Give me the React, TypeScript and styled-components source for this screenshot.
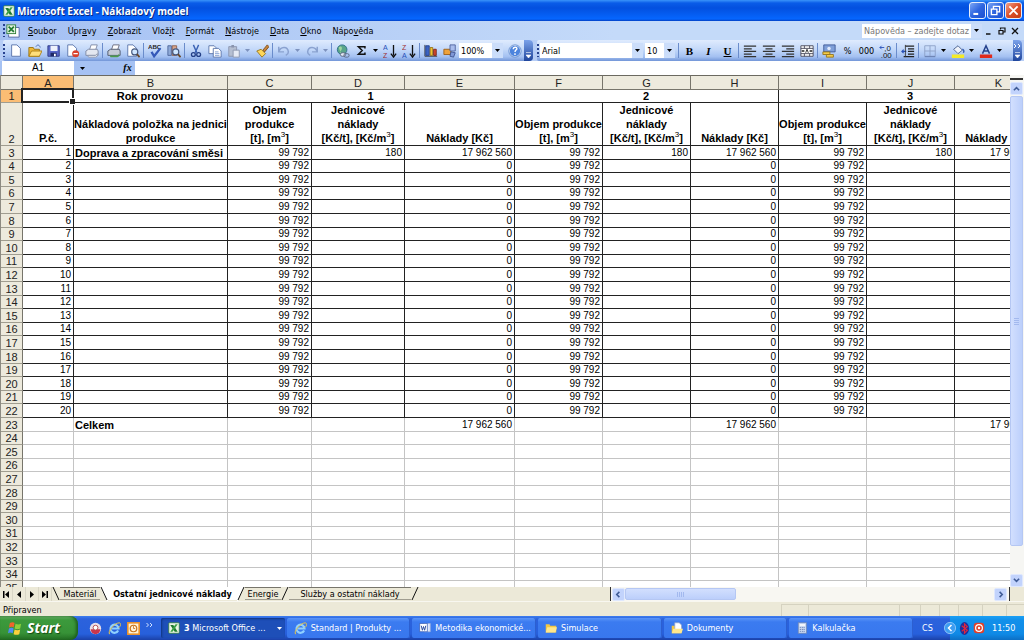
import React from "react";
import styled, { createGlobalStyle, css } from "styled-components";

const UI = `"DejaVu Sans Condensed", "DejaVu Sans", sans-serif`;
const CELL = `"Liberation Sans", Arial, sans-serif`;

const Global = createGlobalStyle`
  * { box-sizing: border-box; }
  html, body { margin: 0; height: 100%; overflow: hidden; }
  body { font-family: ${UI}; font-size: 9px; color: #000; background: #fff; }
  button, input, select { font: inherit; color: inherit; margin: 0; padding: 0; border: 0; border-radius: 0; background: none; outline: none; }
  svg { display: block; flex: none; }
`;

const Window = styled.div`
  display: flex;
  flex-direction: column;
  height: 100vh;
`;

/* ---------- title bar ---------- */
const TitleBar = styled.header`
  display: flex;
  align-items: center;
  flex: none;
  height: 21px;
  padding: 0 2px 0 3px;
  gap: 2px;
  color: #fff;
  background: linear-gradient(#3a94fa 0, #0a5ce8 3px, #0350df 8px, #0560f6 16px, #0566ff 19px, #0340c4 21px);
`;
const Title = styled.h1`
  flex: 1;
  margin: 0;
  font: bold 10px/16px "Open Sans", "Noto Sans", sans-serif;
  text-shadow: 1px 1px #0a2a80;
  white-space: nowrap;
`;
const CaptionButton = styled.button<{ $close?: boolean }>`
  display: grid;
  place-items: center;
  width: 17px;
  height: 17px;
  border: 1px solid #e6eefc;
  border-radius: 3px;
  background: ${(p) =>
    p.$close
      ? "linear-gradient(135deg, #f0a088, #dd4f28 50%, #c33c14)"
      : "linear-gradient(135deg, #7ca6f5, #2f66e0 50%, #1c4fd0)"};
`;
const CaptionGroup = styled.div`
  display: flex;
  gap: 1px;
`;

/* ---------- menu ---------- */
const MenuBar = styled.nav`
  display: flex;
  align-items: center;
  flex: none;
  height: 19px;
  padding: 0 3px;
  background: linear-gradient(90deg, #a4c0f3, #c4daf9 60%);
`;
const Grip = styled.span`
  flex: none;
  width: 2px;
  height: 13px;
  margin-right: 1px;
  background: repeating-linear-gradient(#27418f 0 2px, transparent 2px 4px);
`;
const MenuList = styled.div`
  display: flex;
  gap: 1px;
  margin-left: 3px;
`;
const MenuItem = styled.button`
  padding: 0 5px;
  line-height: 14px;
  white-space: nowrap;
`;
const Spacer = styled.div`
  flex: 1;
`;
const HelpBox = styled.div`
  display: flex;
  align-items: center;
  width: 120px;
  height: 14px;
  background: #fff;
`;
const HelpInput = styled.input`
  flex: 1;
  min-width: 0;
  padding-left: 2px;
  &::placeholder { color: #777; opacity: 1; }
`;
const DropArrow = styled.span`
  display: grid;
  place-items: center;
  flex: none;
  width: 11px;
  align-self: stretch;
  background: #cbddfa;
`;
const MdiButton = styled.button`
  display: grid;
  place-items: center;
  width: 13px;
  height: 14px;
`;

/* ---------- toolbars ---------- */
const ToolRow = styled.div`
  display: flex;
  flex: none;
  height: 21px;
  gap: 4px;
  padding: 0 2px 0 3px;
  background: #b6cdf6;
`;
const Toolbar = styled.div<{ $grow?: boolean }>`
  display: flex;
  align-items: center;
  flex: ${(p) => (p.$grow ? "1" : "none")};
  height: 21px;
  border-radius: 2px 4px 4px 2px;
  background: linear-gradient(#dfebfe, #c3d8f9 45%, #a3c0f1 80%, #7396d8);
  overflow: hidden;
`;
const ToolButton = styled.button`
  display: grid;
  place-items: center;
  flex: none;
  width: 19px;
  height: 19px;
`;
const ToolArrow = styled.button`
  display: grid;
  place-items: center;
  flex: none;
  width: 9px;
  height: 19px;
`;
const Divider = styled.span`
  flex: none;
  width: 1px;
  height: 15px;
  margin: 0 1px;
  background: #6a8ccb;
`;
const Combo = styled.label<{ $w: number }>`
  display: flex;
  flex: none;
  width: ${(p) => p.$w}px;
  height: 15px;
  margin-right: 2px;
  background: #fff;
`;
const ComboSelect = styled.select`
  flex: 1;
  min-width: 0;
  appearance: none;
  padding-left: 2px;
`;
const Overflow = styled.button`
  display: flex;
  flex-direction: column;
  justify-content: space-between;
  align-items: center;
  flex: none;
  width: 9px;
  height: 21px;
  padding: 4px 0 3px;
  margin-left: auto;
  background: linear-gradient(#7ba2ea, #1f459c);
`;
const ToolLabel = styled.span<{ $serif?: boolean; $italic?: boolean; $underline?: boolean }>`
  font-size: 9px;
  line-height: 14px;
  ${(p) =>
    p.$serif &&
    css`
      font: bold 11px/14px "Liberation Serif", serif;
    `}
  font-style: ${(p) => (p.$italic ? "italic" : "normal")};
  text-decoration: ${(p) => (p.$underline ? "underline" : "none")};
`;

/* ---------- formula bar ---------- */
const FormulaBar = styled.div`
  display: flex;
  flex: none;
  height: 14px;
  padding-left: 2px;
  background: #a6c2f3;
`;
const NameBox = styled.input`
  width: 72px;
  height: 14px;
  background: #fff;
  font: 10px/14px ${CELL};
  text-align: center;
`;
const NameArrow = styled.button`
  display: grid;
  place-items: center;
  width: 17px;
`;
const FxButton = styled.button`
  width: 18px;
  margin-left: 26px;
  padding-left: 3px;
  font: italic bold 10px/14px "Liberation Serif", serif;
`;
const FormulaInput = styled.input`
  flex: 1;
  min-width: 0;
  background: #fff;
`;

/* ---------- sheet ---------- */
const Sheet = styled.main`
  display: flex;
  flex: 1;
  min-height: 0;
  border-left: 1px solid #8d8b82;
`;
const GridPane = styled.div`
  flex: 1;
  min-width: 0;
  overflow: hidden;
`;
const Grid = styled.table`
  table-layout: fixed;
  width: 1042px;
  border-spacing: 0;
  font: 10px/12px ${CELL};
`;
const Row = styled.tr<{ $h: number }>`
  height: ${(p) => p.$h}px;
`;
const Head = styled.th<{ $on?: boolean; $top?: boolean }>`
  padding: 0;
  overflow: hidden;
  font-weight: normal;
  font-size: 11px;
  line-height: 12px;
  color: #222;
  vertical-align: bottom;
  text-align: center;
  background: ${(p) => (p.$on ? "#fbbd74" : "#edeadd")};
  border-right: 1px solid #77756b;
  border-bottom: 1px solid ${(p) => (p.$top ? "#77756b" : "#a09d90")};
  ${(p) => p.$top && "border-top: 1px solid #6b6960;"}
`;
type CellProps = { $bold?: boolean; $line?: boolean; $align?: string; $active?: boolean };
const Cell = styled.td<CellProps>`
  position: relative;
  padding: 0 2px 0 1px;
  white-space: nowrap;
  overflow: visible;
  vertical-align: bottom;
  text-align: ${(p) => p.$align || "right"};
  border-right: 1px solid ${(p) => (p.$line ? "#222" : "#c4c4c4")};
  border-bottom: 1px solid ${(p) => (p.$line ? "#222" : "#c4c4c4")};
  ${(p) =>
    p.$bold &&
    css`
      font-size: 11px;
      font-weight: bold;
    `}
  ${(p) =>
    p.$active &&
    css`
      &::before {
        content: "";
        position: absolute;
        inset: -2px -1px -1px -2px;
        border: 2px solid #222;
      }
      &::after {
        content: "";
        position: absolute;
        right: -3px;
        bottom: -3px;
        width: 5px;
        height: 5px;
        border: 1px solid #fff;
        background: #222;
      }
    `}
`;
const Caption = styled.td`
  padding: 0;
  white-space: nowrap;
  vertical-align: bottom;
  text-align: center;
  font-size: 11px;
  font-weight: bold;
  line-height: 14px;
  border-right: 1px solid #222;
  border-bottom: 1px solid #222;
  sup { font-size: 8px; font-weight: normal; line-height: 0; }
`;
const Line = styled.div`
  display: flex;
  justify-content: center;
`;

/* ---------- scrollbars ---------- */
const VScroll = styled.div`
  display: flex;
  flex-direction: column;
  flex: none;
  width: 14px;
  padding: 3px 1px 0 0;
  background: #f6f6f3;
`;
const SplitBox = styled.div`
  height: 2px;
  margin-bottom: 2px;
  background: #333;
`;
const ScrollButton = styled.button`
  display: grid;
  place-items: center;
  flex: none;
  width: 13px;
  height: 13px;
  border: 1px solid #dfe8fe;
  border-radius: 2px;
  background: #c2d3fc;
`;
const VThumb = styled.div`
  flex: 16;
  margin-top: 1px;
  display: grid;
  place-items: center;
  border: 1px solid #b5c7f3;
  border-radius: 2px;
  background: linear-gradient(90deg, #d2dffe, #bccffb);
`;
const HScroll = styled.div`
  display: flex;
  align-items: center;
  flex: 1;
  min-width: 0;
  height: 14px;
  padding: 0 2px 0 1px;
  background: #f8f7f2;
  border-left: 1px solid #333;
  border-right: 1px solid #333;
`;
const HThumb = styled.div`
  width: 28%;
  height: 12px;
  display: grid;
  place-items: center;
  border: 1px solid #b5c7f3;
  border-radius: 2px;
  background: linear-gradient(#d2dffe, #bccffb);
`;

/* ---------- sheet tabs ---------- */
const TabRow = styled.div`
  display: flex;
  flex: none;
  height: 14px;
  background: #ece9d8;
`;
const TabList = styled.div`
  display: flex;
  align-items: center;
  flex: none;
  width: calc(60% - 4px);
  overflow: hidden;
`;
const NavButton = styled.button`
  display: grid;
  place-items: center;
  width: 13px;
  height: 14px;
  border-right: 1px solid #d9d6c6;
`;
const Tab = styled.button<{ $on?: boolean; $w: number }>`
  flex: none;
  width: ${(p) => p.$w}px;
  height: 13px;
  align-self: flex-start;
  line-height: 12px;
  white-space: nowrap;
  font-weight: ${(p) => (p.$on ? "bold" : "normal")};
  background: ${(p) => (p.$on ? "#fff" : "#ece9d8")};
  border-top: ${(p) => (p.$on ? 0 : 1)}px solid #77756b;
  border-bottom: ${(p) => (p.$on ? 0 : 1)}px solid #a09d90;
`;
const Corner = styled.div`
  width: 14px;
`;

/* ---------- status ---------- */
const StatusBar = styled.footer`
  display: flex;
  align-items: center;
  flex: none;
  height: 15px;
  padding: 2px 0 0 3px;
  background: #ece9d8;
  border-top: 1px solid #f8f7f0;
`;
const StatusSlot = styled.span<{ $w: number }>`
  width: ${(p) => p.$w}px;
  height: 12px;
  border: solid #d5d2c0;
  border-width: 1px 0 0 1px;
`;

/* ---------- task bar ---------- */
const TaskBar = styled.footer`
  display: flex;
  align-items: center;
  flex: none;
  height: 24px;
  color: #fff;
  background: linear-gradient(#3d7ef0, #2c62dc 3px, #2760dc 18px, #1b41a8);
`;
const StartButton = styled.button`
  display: flex;
  align-items: center;
  gap: 4px;
  flex: none;
  width: 78px;
  height: 24px;
  padding-left: 8px;
  border-radius: 0 8px 8px 0;
  background: linear-gradient(#6cb36c, #3c9a3c 4px, #379237 17px, #226c22);
  box-shadow: inset -2px 0 3px #1d5e1d;
  font: italic bold 14px/20px "Open Sans", "Noto Sans", sans-serif;
  text-shadow: 1px 1px 1px #134d13;
`;
const QuickLaunch = styled.div`
  display: flex;
  align-items: center;
  gap: 6px;
  flex: none;
  width: 83px;
  padding-left: 11px;
`;
const QuickButton = styled.button`
  width: 13px;
  height: 13px;
`;
const Tasks = styled.div`
  display: flex;
  flex: 1;
  min-width: 0;
  gap: 2px;
`;
const Task = styled.button<{ $on?: boolean }>`
  display: flex;
  align-items: center;
  gap: 4px;
  flex: 1 1 0;
  min-width: 0;
  height: 20px;
  padding: 0 3px 0 7px;
  border-radius: 2px;
  white-space: nowrap;
  background: ${(p) => (p.$on ? "#1e4fb8" : "linear-gradient(#5a95f8, #3b7bf0 4px, #3877ee)")};
  box-shadow: ${(p) => (p.$on ? "inset 1px 1px 2px #12357f" : "inset -1px 0 #2c5fd0")};
`;
const Language = styled.button`
  width: 37px;
  padding-right: 8px;
`;
const Tray = styled.div`
  display: flex;
  align-items: center;
  gap: 3px;
  flex: none;
  height: 24px;
  width: 74px;
  background: linear-gradient(#1aa0f5, #1290ea 4px, #0f8ae6 18px, #0d6fc4);
`;
const TrayArrow = styled.button`
  width: 12px;
  height: 12px;
  margin-left: -6px;
`;
const Clock = styled.time`
  margin-left: 4px;
`;

/* ---------- drawings ---------- */
const Svg = ({ children, w = 15, h = 15, vb = "0 0 16 16" }: { children: React.ReactNode; w?: number; h?: number; vb?: string }) => (
  <svg width={w} height={h} viewBox={vb} fill="none" aria-hidden="true">{children}</svg>
);
const Down = ({ c = "#000" }: { c?: string }) => (
  <Svg w={5} h={3} vb="0 0 5 3"><path d="M0 0h5L2.500 3z" fill={c} /></Svg>
);
const ExcelIcon = ({ s = 12 }: { s?: number }) => (
  <Svg w={s} h={s}>
    <rect x="1" y="1" width="14" height="14" rx="1" fill="#e9f5e4" stroke="#2c7d35" />
    <path d="M3 4h4l6 9H9z" fill="#1f7a2f" /><path d="M13 3H10L3 13h3z" fill="#3aa045" />
  </Svg>
);
const IeIcon = ({ s = 13 }: { s?: number }) => (
  <Svg w={s} h={s}>
    <path d="M12.500 10.500A5 5 0 1 1 13 8H5" stroke="#8fd0ff" strokeWidth="2.600" />
    <path d="M2 15C-1 12 8 1 14 1c3 1 1 5-1 6" stroke="#f2c840" strokeWidth="1.200" />
  </Svg>
);
const Page = ({ x = 3, y = 1 }: { x?: number; y?: number }) => (
  <path d={`M${x} ${y}h6l4 4v9H${x}z`} fill="#fff" stroke="#5570a8" />
);
const Lens = () => (<>
  <circle cx="10" cy="9" r="3.500" fill="#cfe6ff" stroke="#44577e" strokeWidth="1.300" />
  <path d="M12.500 11.500l3 3.500" stroke="#6a4a2a" strokeWidth="2" />
</>);
const Printer = ({ c = "#4b9a4b" }: { c?: string }) => (<>
  <path d="M5 7l2-6h7l-2 6z" fill="#fff" stroke="#667" />
  <path d="M1 8l3-2h10l1 2v5H1z" fill="#c5cbd6" stroke="#4a5468" /><path d="M3 13h9l2-2v3l-2 1H4z" fill={c} />
</>);

const icons: Record<string, React.ReactNode> = {
  "Nový": <Page />,
  "Otevřít": <><path d="M1 4h5l1 2h6v8H1z" fill="#f0b93a" stroke="#96700e" /><path d="M1 14l3-6h12l-3 6z" fill="#ffdf7c" stroke="#a87c14" /><path d="M9 3c2-3 4-2 5 1" stroke="#3c5fae" /></>,
  "Uložit": <><path d="M1 2h13v12H1z" fill="#5867c8" stroke="#2c3784" /><path d="M4 2h8v6H4z" fill="#eef1fb" /><path d="M4 10h7v4H4z" fill="#1f2a66" /><path d="M8 11h2v3H8z" fill="#fff" /></>,
  "Oprávnění": <><Page x={2} /><circle cx="11" cy="11" r="4" fill="#d8402c" /><path d="M8.500 11h5" stroke="#fff" strokeWidth="1.600" /></>,
  "Pošta": <><path d="M5 7l2-6h7l-2 6z" fill="#fff" stroke="#7c86a0" /><path d="M1 8l3-2h10l1 2v5H1z" fill="#e3e7f0" stroke="#7c86a0" /><path d="M3 13h9l2-2v3l-2 1H4z" fill="#f4f6fb" stroke="#8c95ac" /></>,
  "Tisk": <Printer />,
  "Náhled": <><Page x={2} /><Lens /></>,
  "Pravopis": <><text x="0" y="6" fontSize="7" fontFamily="Liberation Sans" fontWeight="bold" fill="#222">ABC</text><path d="M4 9l3 5 7-9" stroke="#3558b8" strokeWidth="2.600" /></>,
  "Zdroje": <><path d="M1 2h4v11H1z" fill="#8fabd8" stroke="#4a6499" /><path d="M6 2h5v11H6z" fill="#d8a58c" stroke="#8c5f4a" /><Lens /></>,
  "Vyjmout": <><path d="M5 1l4 9M11 1L7 10" stroke="#3b62b4" strokeWidth="1.600" /><circle cx="5" cy="12" r="2.200" stroke="#233f86" strokeWidth="1.500" /><circle cx="11" cy="12" r="2.200" stroke="#233f86" strokeWidth="1.500" /></>,
  "Kopírovat": <><path d="M1 2h6l2 2v7H1z" fill="#fff" stroke="#5570a8" /><path d="M6 5h6l3 3v7H6z" fill="#fff" stroke="#5570a8" /><path d="M8 9h4M8 11h5M8 13h5" stroke="#7f9bd0" /></>,
  "Vložit": <><path d="M2 3h9v11H2z" fill="#b5bfd2" stroke="#8994ad" /><path d="M5 1h3v3H5z" fill="#8994ad" /><path d="M7 7h7v8H7z" fill="#e6ebf5" stroke="#8994ad" /></>,
  "Štětec": <><path d="M9 7l5-6 2 2-5 6z" fill="#c8843a" stroke="#7c4b16" /><path d="M2 8l5-2 5 5-4 4z" fill="#ffd75a" stroke="#94721a" /></>,
  "Zpět": <path d="M2 3v6h6M2 9c2-6 10-7 11 0 0 2-1 3-3 4" stroke="#8aa2d0" strokeWidth="1.700" />,
  "Znovu": <path d="M14 3v6H8M14 9c-2-6-10-7-11 0 0 2 1 3 3 4" stroke="#8aa2d0" strokeWidth="1.700" />,
  "Odkaz": <><circle cx="7" cy="6.500" r="5.500" fill="#5aa58a" stroke="#2a6b8a" /><path d="M3 4c3-3 5 1 3 3s-2 3 0 4" fill="#9fd6a0" /><rect x="5" y="10" width="6" height="4" rx="2" fill="#e6ecf6" stroke="#56647e" /><rect x="9" y="11" width="6" height="4" rx="2" stroke="#56647e" /></>,
  "Součet": <path d="M13 5V2.500H3.500L9 8l-5.500 5.500H13V11" stroke="#111" strokeWidth="2.200" />,
  "Vzestupně": <><text x="0" y="7" fontSize="8" fontFamily="Liberation Sans" fill="#2850b8">A</text><text x="0" y="16" fontSize="8" fontFamily="Liberation Sans" fill="#a03030">Z</text><path d="M12 1v12M9 11l3 4 3-4" stroke="#111" strokeWidth="1.500" /></>,
  "Sestupně": <><text x="0" y="7" fontSize="8" fontFamily="Liberation Sans" fill="#a03030">Z</text><text x="0" y="16" fontSize="8" fontFamily="Liberation Sans" fill="#2850b8">A</text><path d="M12 1v12M9 11l3 4 3-4" stroke="#111" strokeWidth="1.500" /></>,
  "Graf": <><path d="M1 1v13h14" stroke="#333" /><path d="M2 2h4v11H2z" fill="#3c64c4" stroke="#223f8c" /><path d="M7 4h3v9H7z" fill="#f2c22e" stroke="#94721a" /><path d="M11 6h3v7h-3z" fill="#d2472c" stroke="#7c2414" /></>,
  "Kreslení": <><path d="M1 6h8v6H1z" fill="#eda23c" stroke="#9c5d14" /><path d="M8 1h6v7H8z" fill="#a9bdec" stroke="#4a5f9c" /><path d="M9 9l5 1-2 5-4-1z" fill="#7f98d8" stroke="#3d5290" /></>,
  "Nápověda": <><circle cx="8" cy="8" r="6.500" fill="#4d84dd" stroke="#fff" /><circle cx="8" cy="8" r="7" stroke="#5b86cc" /><path d="M6 6c0-3 5-3 4 0-1 1-2 1-2 3M8 10.500v2" stroke="#fff" strokeWidth="1.600" /></>,
  "Vlevo": <path d="M1 2.500h14M1 5.500h9M1 8.500h14M1 11.500h9M1 14.500h14" stroke="#333" strokeWidth="1.400" />,
  "Na střed": <path d="M1 2.500h14M4 5.500h8M1 8.500h14M4 11.500h8M1 14.500h14" stroke="#333" strokeWidth="1.400" />,
  "Vpravo": <path d="M1 2.500h14M6 5.500h9M1 8.500h14M6 11.500h9M1 14.500h14" stroke="#333" strokeWidth="1.400" />,
  "Sloučit": <><path d="M1 2h14v12H1zM1 5h14M1 11h14M5 2v3M11 2v3M5 11v3M11 11v3" fill="#fff" stroke="#445" /><path d="M2 8h3M11 8h3" stroke="#222" strokeWidth="1.500" /><path d="M6.500 10l1.500-4 1.500 4" stroke="#222" /></>,
  "Měna": <><path d="M2 1h13v8H2z" fill="#7f9fd8" stroke="#3b5796" /><circle cx="8" cy="5" r="2" fill="#dfe9fb" /><path d="M1 9h8v3H1z" fill="#f3cc4a" stroke="#94721a" /><path d="M5 12h8v3H5z" fill="#f3cc4a" stroke="#94721a" /></>,
  "Desetinná": <><text x="6" y="8" fontSize="9" fontFamily="Liberation Sans" fill="#111">,0</text><text x="2" y="16" fontSize="9" fontFamily="Liberation Sans" fill="#111">,00</text><path d="M6 4H1m2-2L1 4l2 2" stroke="#2850b8" /></>,
  "Odsazení": <><path d="M5 2.500h10M8 5.500h7M8 8.500h7M8 11.500h7M3 14.500h12" stroke="#222" strokeWidth="1.500" /><path d="M6 8.500H1m2-2l-2 2 2 2" stroke="#2850b8" strokeWidth="1.300" /><path d="M5 1v14" stroke="#333" /></>,
  "Ohraničení": <><path d="M2 2h12v12H2zM8 2v12M2 8h12" stroke="#8c9fc6" /><path d="M2 14.500h12" stroke="#6078ac" /></>,
  "Výplň": <><path d="M3 6l5-4 5 5-5 4z" fill="#eef2fa" stroke="#445a88" /><path d="M13 6c2 1 2 3 1 4" stroke="#3b62b4" strokeWidth="1.800" /><path d="M1 12h14v4H1z" fill="#f4ea28" /></>,
  "Písmo": <><path d="M4 11l4-9 4 9M5.500 8h5" stroke="#25418c" strokeWidth="1.700" /><path d="M1 12h14v4H1z" fill="#e02a1c" /></>,
};

const Tool = ({ name }: { name: string }) => (
  <ToolButton aria-label={name}><Svg w={name === "Součet" ? 11 : 14} h={name === "Součet" ? 11 : 14}>{icons[name]}</Svg></ToolButton>
);
const toolItems = (list: string[]) =>
  list.map((n, i) =>
    n === "|" ? <Divider key={i} /> : n === "v" ? <ToolArrow key={i} aria-label="Další"><Down /></ToolArrow>
      : n === "-" ? <ToolArrow key={i} aria-label="Další"><Down c="#7d92be" /></ToolArrow> : <Tool key={i} name={n} />
  );
const More = ({ dbl }: { dbl?: boolean }) => (
  <Overflow aria-label="Možnosti panelu">
    <Svg w={7} h={4} vb="0 0 7 4">{dbl && <path d="M0 0l2 2-2 2M4 0l2 2-2 2" stroke="#fff" />}</Svg>
    <Svg w={5} h={6} vb="0 0 5 6"><path d="M0 .5h5M0 3h5L2.500 6z" stroke="#fff" strokeWidth=".6" fill="#fff" /></Svg>
  </Overflow>
);
const Chevron = ({ d }: { d: string }) => (
  <Svg w={7} h={7} vb="0 0 8 8"><path d={d} stroke="#3f5b96" strokeWidth="1.800" /></Svg>
);

/* ---------- data ---------- */
const columns = [["A", 51], ["B", 154], ["C", 84], ["D", 93], ["E", 110], ["F", 88], ["G", 88], ["H", 88], ["I", 88], ["J", 88], ["K", 88]] as const;
const menus = [["", "S", "oubor"], ["Úpr", "a", "vy"], ["", "Z", "obrazit"], ["Vlož", "i", "t"], ["", "F", "ormát"], ["", "N", "ástroje"], ["", "D", "ata"], ["", "O", "kno"], ["Nápo", "v", "ěda"]];
const heights = [14, 13, 14, 13, 14];
const years = [1, 2, 3];

const Volume = ({ stacked }: { stacked?: boolean }) => (
  <Caption>
    {stacked ? <><Line>Objem</Line><Line>produkce</Line></> : <Line>Objem produkce</Line>}
    [t], [m<sup>3</sup>]
  </Caption>
);

const cost = (n: number, year: number) => {
  if (n === 3 || n === 23) return "17 962 560";
  return n < 23 && year < 3 ? "0" : "";
};

function Worksheet() {
  const body = [];
  for (let n = 3; n <= 35; n++) {
    const line = n <= 22;
    body.push(
      <Row key={n} $h={heights[(n - 3) % 5]}>
        <Head scope="row">{n}</Head>
        <Cell $line={line}>{line ? n - 2 : ""}</Cell>
        <Cell $line={line} $bold={n === 3 || n === 23} $align="left">
          {n === 3 ? "Doprava a zpracování směsi" : n === 23 ? "Celkem" : ""}
        </Cell>
        {years.map((y) => (
          <React.Fragment key={y}>
            <Cell $line={line}>{line ? "99 792" : ""}</Cell>
            <Cell $line={line}>{n === 3 ? "180" : ""}</Cell>
            <Cell $line={line}>{cost(n, y)}</Cell>
          </React.Fragment>
        ))}
      </Row>
    );
  }
  return (
    <Grid>
      <colgroup>
        <col width={22} />
        {columns.map(([c, w]) => <col key={c} width={w} />)}
      </colgroup>
      <thead>
        <Row $h={15}>
          <Head $top />
          {columns.map(([c]) => <Head key={c} scope="col" $top $on={c === "A"}>{c}</Head>)}
        </Row>
      </thead>
      <tbody>
        <Row $h={13}>
          <Head scope="row" $on>1</Head>
          <Cell $line $active />
          <Cell $line $bold $align="center">Rok provozu</Cell>
          {years.map((y) => <Cell key={y} colSpan={3} $line $bold $align="center">{y}</Cell>)}
        </Row>
        <Row $h={43}>
          <Head scope="row">2</Head>
          <Caption>P.č.</Caption>
          <Caption><Line>Nákladová položka na jednici</Line>produkce</Caption>
          {years.map((y) => (
            <React.Fragment key={y}>
              <Volume stacked={y === 1} />
              <Caption><Line>Jednicové</Line><Line>náklady</Line>[Kč/t], [Kč/m<sup>3</sup>]</Caption>
              <Caption>Náklady [Kč]</Caption>
            </React.Fragment>
          ))}
        </Row>
        {body}
      </tbody>
    </Grid>
  );
}

const Slash = ({ d, left, right }: { d: string; left: string; right: string }) => (
  <Svg w={8} h={14} vb="0 0 8 14">
    <path d={d === "\\" ? "M0 0L7 14H0z" : "M0 0H7L1 14H0z"} fill={left} />
    <path d={d === "\\" ? "M0 0H8V14H7z" : "M7 0H8V14H1z"} fill={right} />
    <path d={d === "\\" ? "M1 0L7 13" : "M7 0L1 13"} stroke="#111" />
  </Svg>
);

export default function App() {
  const beige = "#ece9d8";
  return (
    <Window>
      <Global />
      <TitleBar>
        <ExcelIcon />
        <Title>Microsoft Excel - Nákladový model</Title>
        <CaptionGroup>
          <CaptionButton aria-label="Minimalizovat"><Svg w={11} h={11}><path d="M2 13h7" stroke="#fff" strokeWidth="3" /></Svg></CaptionButton>
          <CaptionButton aria-label="Obnovit"><Svg w={11} h={11}><path d="M5 5V2h9v8h-3M2 6h8v8H2z" stroke="#fff" strokeWidth="2" /></Svg></CaptionButton>
          <CaptionButton $close aria-label="Zavřít"><Svg w={11} h={11}><path d="M2 2l12 12M14 2L2 14" stroke="#fff" strokeWidth="2.600" /></Svg></CaptionButton>
        </CaptionGroup>
      </TitleBar>

      <MenuBar>
        <Grip />
        <Svg w={14} h={14}><path d="M5 4h10v11H3v-3" fill="#fff" stroke="#4a5f9c" /><rect x="1" y="1" width="10" height="10" fill="#e9f5e4" stroke="#2c7d35" /><path d="M3 3l6 6M9 3L3 9" stroke="#1f7a2f" strokeWidth="2" /></Svg>
        <MenuList>
          {menus.map(([a, u, b]) => <MenuItem key={a + u + b}>{a}<u>{u}</u>{b}</MenuItem>)}
        </MenuList>
        <Spacer />
        <HelpBox>
          <HelpInput aria-label="Nápověda" placeholder="Nápověda – zadejte dotaz" />
          <DropArrow><Down /></DropArrow>
        </HelpBox>
        <MdiButton aria-label="Minimalizovat sešit"><Svg w={8} h={8}><path d="M2 14h9" stroke="#111" strokeWidth="3" /></Svg></MdiButton>
        <MdiButton aria-label="Obnovit sešit"><Svg w={8} h={8}><path d="M5 5V2h9v8h-3M2 7h8v7H2z" stroke="#111" strokeWidth="2.400" /></Svg></MdiButton>
        <MdiButton aria-label="Zavřít sešit"><Svg w={8} h={8}><path d="M2 2l12 12M14 2L2 14" stroke="#111" strokeWidth="2.600" /></Svg></MdiButton>
      </MenuBar>

      <ToolRow>
        <Toolbar>
          <Grip />
          {toolItems(["Nový", "Otevřít", "Uložit", "Oprávnění", "Pošta", "|", "Tisk", "Náhled", "|", "Pravopis", "Zdroje", "|", "Vyjmout", "Kopírovat", "Vložit", "-", "Štětec", "|", "Zpět", "-", "Znovu", "-", "|", "Odkaz", "Součet", "v", "Vzestupně", "Sestupně", "|", "Graf", "Kreslení"])}
          <Combo $w={44}>
            <ComboSelect aria-label="Lupa"><option>100%</option></ComboSelect>
            <DropArrow><Down /></DropArrow>
          </Combo>
          <Tool name="Nápověda" />
          <More />
        </Toolbar>
        <Toolbar $grow>
          <Grip />
          <Combo $w={103}>
            <ComboSelect aria-label="Písmo"><option>Arial</option></ComboSelect>
            <DropArrow><Down /></DropArrow>
          </Combo>
          <Combo $w={30}>
            <ComboSelect aria-label="Velikost písma"><option>10</option></ComboSelect>
            <DropArrow><Down /></DropArrow>
          </Combo>
          <Divider />
          <ToolButton aria-label="Tučné"><ToolLabel $serif>B</ToolLabel></ToolButton>
          <ToolButton aria-label="Kurzíva"><ToolLabel $serif $italic>I</ToolLabel></ToolButton>
          <ToolButton aria-label="Podtržené"><ToolLabel $serif $underline>U</ToolLabel></ToolButton>
          {toolItems(["|", "Vlevo", "Na střed", "Vpravo", "Sloučit", "|", "Měna"])}
          <ToolButton><ToolLabel>%</ToolLabel></ToolButton>
          <ToolButton><ToolLabel>000</ToolLabel></ToolButton>
          {toolItems(["Desetinná", "|", "Odsazení", "|", "Ohraničení", "v", "Výplň", "v", "Písmo", "v"])}
          <More dbl />
        </Toolbar>
      </ToolRow>

      <FormulaBar>
        <NameBox aria-label="Pole názvů" defaultValue="A1" />
        <NameArrow aria-label="Názvy"><Down /></NameArrow>
        <FxButton>fx</FxButton>
        <FormulaInput aria-label="Řádek vzorců" />
      </FormulaBar>

      <Sheet>
        <GridPane><Worksheet /></GridPane>
        <VScroll>
          <SplitBox />
          <ScrollButton aria-label="Nahoru"><Chevron d="M1 6l3-3 3 3" /></ScrollButton>
          <VThumb><Svg w={5} h={7} vb="0 0 5 7"><path d="M0 .5h5M0 2.500h5M0 4.500h5M0 6.500h5" stroke="#a3b9ee" /></Svg></VThumb>
          <Spacer />
          <ScrollButton aria-label="Dolů"><Chevron d="M1 2l3 3 3-3" /></ScrollButton>
        </VScroll>
      </Sheet>

      <TabRow>
        <TabList>
          <NavButton aria-label="První list"><Svg w={6} h={7} vb="0 0 6 7"><path d="M0 0h1.500v7H0zM6 0v7L2 3.500z" fill="#000" /></Svg></NavButton>
          <NavButton aria-label="Předchozí list"><Svg w={4} h={7} vb="0 0 4 7"><path d="M4 0v7L0 3.500z" fill="#000" /></Svg></NavButton>
          <NavButton aria-label="Další list"><Svg w={4} h={7} vb="0 0 4 7"><path d="M0 0v7l4-3.500z" fill="#000" /></Svg></NavButton>
          <NavButton aria-label="Poslední list"><Svg w={6} h={7} vb="0 0 6 7"><path d="M4.500 0H6v7H4.500zM0 0v7l4-3.500z" fill="#000" /></Svg></NavButton>
          <Slash d={"\\"} left={beige} right={beige} />
          <Tab $w={40}>Materiál</Tab>
          <Slash d={"\\"} left={beige} right="#fff" />
          <Tab $w={129} $on>Ostatní jednicové náklady</Tab>
          <Slash d="/" left="#fff" right={beige} />
          <Tab $w={36}>Energie</Tab>
          <Slash d="/" left={beige} right={beige} />
          <Tab $w={122}>Služby a ostatní náklady</Tab>
          <Slash d="/" left={beige} right={beige} />
        </TabList>
        <HScroll>
          <ScrollButton aria-label="Vlevo"><Chevron d="M5 1L2 4l3 3" /></ScrollButton>
          <HThumb><Svg w={7} h={5} vb="0 0 7 5"><path d="M.5 0v5M2.500 0v5M4.500 0v5M6.500 0v5" stroke="#a3b9ee" /></Svg></HThumb>
          <Spacer />
          <ScrollButton aria-label="Vpravo"><Chevron d="M3 1l3 3-3 3" /></ScrollButton>
        </HScroll>
        <Corner />
      </TabRow>

      <StatusBar>
        Připraven
        <Spacer />
        {[27, 91, 21, 19, 19, 24, 24, 18].map((w, i) => <StatusSlot key={i} $w={w} />)}
      </StatusBar>

      <TaskBar>
        <StartButton>
          <Svg w={15} h={15}>
            <path d="M2 2c2-1 4-1 5 0L6 7C5 6 3 6 1 7z" fill="#f0642c" /><path d="M8 3c2 1 4 1 6 0l-1 5c-2 1-4 1-6 0z" fill="#8ccf3c" />
            <path d="M1 8c2-1 4-1 5 0l-1 5c-2-1-3-1-5 0z" fill="#4d8df4" /><path d="M7 9c2 1 4 1 6 0l-1 5c-2 1-4 1-6 0z" fill="#fbd13c" />
          </Svg>
          Start
        </StartButton>
        <QuickLaunch>
          <QuickButton aria-label="Program"><Svg w={13} h={13}><circle cx="8" cy="8" r="7" fill="#e9dfe8" /><path d="M2 9a6 6 0 0 0 12 0z" fill="#c9364c" /><circle cx="8" cy="7" r="3" fill="#fff" stroke="#a33" /></Svg></QuickButton>
          <QuickButton aria-label="Internet Explorer"><IeIcon /></QuickButton>
          <QuickButton aria-label="Outlook"><Svg w={13} h={13}><rect x="1" y="1" width="14" height="14" fill="#fff3d8" stroke="#e8912c" strokeWidth="2" /><circle cx="8" cy="8" r="4" stroke="#c8741c" strokeWidth="1.500" /><path d="M8 5v3h2" stroke="#c8741c" /></Svg></QuickButton>
          <Svg w={7} h={13} vb="0 0 7 13"><path d="M.5 1l2 2-2 2M4 1l2 2-2 2" stroke="#cfe0ff" /></Svg>
        </QuickLaunch>
        <Tasks>
          <Task $on><ExcelIcon /><span><b>3</b> Microsoft Office ...</span><Spacer /><Down c="#fff" /></Task>
          <Task><IeIcon /><span>Standard | Produkty ...</span></Task>
          <Task><Svg w={12} h={12}><path d="M7 2h8v11H7z" fill="#dfe8fb" stroke="#98aede" /><rect x="1" y="2" width="10" height="11" fill="#fff" stroke="#3e62b8" /><path d="M3 5l1.500 6L6 6l1.500 5L9 5" stroke="#2a4a9c" strokeWidth="1.300" /></Svg><span>Metodika ekonomické...</span></Task>
          <Task><Svg w={12} h={12}><path d="M1 3h5l1 2h8v9H1z" fill="#f2c744" /><path d="M1 14l2-7h13l-2 7z" fill="#ffe78c" /></Svg><span>Simulace</span></Task>
          <Task><Svg w={12} h={12}><path d="M1 5h5l1 2h7v8H1z" fill="#f2c744" /><path d="M5 1h6l3 3v8H5z" fill="#fff" stroke="#8fa3c8" /><path d="M1 15l2-6h13l-2 6z" fill="#ffe78c" /></Svg><span>Dokumenty</span></Task>
          <Task><Svg w={12} h={12}><rect x="3" y="1" width="11" height="14" fill="#c9d8f2" stroke="#6f86b4" /><path d="M5 3h7v2H5z" fill="#fff" /><path d="M5 7.500h7M5 10h7M5 12.500h7" stroke="#5d76aa" strokeDasharray="2 1" /></Svg><span>Kalkulačka</span></Task>
        </Tasks>
        <Language>CS</Language>
        <Tray>
          <TrayArrow aria-label="Zobrazit ikony"><Svg w={12} h={12}><circle cx="8" cy="8" r="7.500" fill="#3d9df2" stroke="#a8d4fb" /><path d="M10 4L6 8l4 4" stroke="#fff" strokeWidth="2" /></Svg></TrayArrow>
          <Svg w={11} h={13} vb="0 0 12 14"><ellipse cx="6" cy="7" rx="5" ry="7" fill="#1c2f9c" /><path d="M3 4l6 5-3 3V2l3 3-6 5" stroke="#e0263c" strokeWidth="1.300" /></Svg>
          <Svg w={12} h={12}><rect x="1" y="1" width="14" height="14" rx="4" fill="#e2402a" /><circle cx="8" cy="8" r="4.500" stroke="#fff" strokeWidth="1.600" /><circle cx="8" cy="8" r="1.600" fill="#fff" /></Svg>
          <Clock>11:50</Clock>
        </Tray>
      </TaskBar>
    </Window>
  );
}
